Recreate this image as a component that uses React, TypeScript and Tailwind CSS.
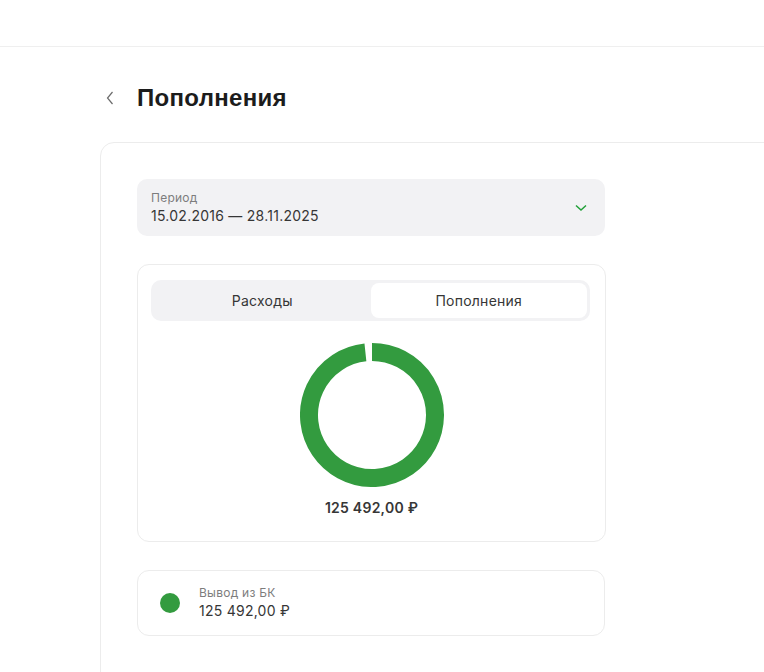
import React from "react";

function Donut() {
  const cx = 72, cy = 72, r = 63;
  const a = (354 * Math.PI) / 180;
  const ex = cx + r * Math.sin(a);
  const ey = cy - r * Math.cos(a);
  return (
    <svg width="144" height="144" viewBox="0 0 144 144">
      <path
        d={`M ${cx} ${cy - r} A ${r} ${r} 0 1 1 ${ex} ${ey}`}
        fill="none"
        stroke="#339b3f"
        strokeWidth="18"
      />
    </svg>
  );
}

export default function App() {
  return (
    <div className="w-[764px] h-[672px] overflow-hidden bg-white text-[#2b2b2b] tracking-[0.25px]" style={{ fontFamily: "Inter, 'Noto Sans', sans-serif" }}>
      <div className="h-[47px] border-b border-[#efefef]" />
      <div className="pl-[100px]">
        <div className="flex items-center h-[32px] mt-[35px]">
          <svg width="8" height="14" viewBox="0 0 8 14" className="ml-[6px]">
            <path d="M6.5 1 L1.5 7 L6.5 13" fill="none" stroke="#6b6b6b" strokeWidth="1.2" />
          </svg>
          <h1 className="ml-[23px] text-[24px] font-bold text-[#1c1c1c] tracking-[0.3px]" style={{ fontFamily: "'Liberation Sans', Arial, sans-serif" }}>
            Пополнения
          </h1>
        </div>
        <div className="mt-[28px] w-[720px] h-[600px] border border-[#ececec] rounded-[14px] pl-[36px] pt-[36px]">
          <div className="w-[468px] h-[57px] bg-[#f2f2f4] rounded-[10px] pl-[14px] pr-[16px] flex items-center justify-between">
            <div className="flex flex-col">
              <span className="text-[12px] leading-[16px] text-[#7d7d7d]">Период</span>
              <span className="text-[14px] leading-[20px] text-[#363636]">15.02.2016 — 28.11.2025</span>
            </div>
            <svg width="12" height="8" viewBox="0 0 12 8" className="mr-[2px]">
              <path d="M1 1.5 L6 6 L11 1.5" fill="none" stroke="#21a038" strokeWidth="1.5" />
            </svg>
          </div>
          <div className="mt-[28px] w-[469px] border border-[#ececec] rounded-[12px] pt-[15px] pb-[23px] pl-[13px] pr-[15px] flex flex-col items-center">
            <div className="w-full h-[41px] bg-[#f2f2f4] rounded-[10px] p-[3px] flex">
              <div className="flex-1 flex items-center justify-center text-[14px] text-[#363636]">Расходы</div>
              <div className="flex-1 flex items-center justify-center text-[14px] text-[#363636] bg-white rounded-[8px]">Пополнения</div>
            </div>
            <div className="mt-[22px] ml-[2px]">
              <Donut />
            </div>
            <div className="mt-[11px] ml-[2px] text-[14px] leading-[20px] font-semibold text-[#363636]">125 492,00 ₽</div>
          </div>
          <div className="mt-[28px] w-[468px] h-[66px] border border-[#ececec] rounded-[12px] pl-[22px] flex items-center">
            <div className="w-[20px] h-[20px] rounded-full bg-[#339b3f]" />
            <div className="ml-[19px] flex flex-col">
              <span className="text-[12px] leading-[16px] text-[#7d7d7d]">Вывод из БК</span>
              <span className="text-[14px] leading-[20px] text-[#363636]">125 492,00 ₽</span>
            </div>
          </div>
        </div>
      </div>
    </div>
  );
}
